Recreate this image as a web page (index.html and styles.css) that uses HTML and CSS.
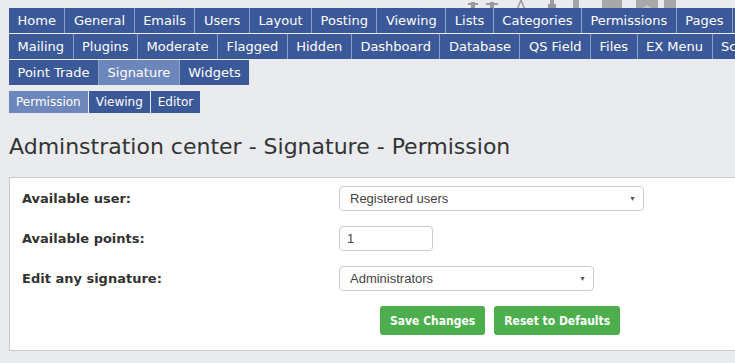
FILE: index.html
```html
<!DOCTYPE html>
<html lang="en">
  <head>
    <meta charset="UTF-8" />
    <title>Admin - Signature</title>
    <link rel="stylesheet" href="styles.css">
  </head>
  <body>
    <div class="page">
      <svg class="skyline" width="735" height="10" viewBox="0 0 735 10">
        <rect x="471" y="2" width="4" height="8" fill="#9a9a9a" />
        <rect x="468" y="3" width="10" height="2" fill="#9a9a9a" />
        <rect x="490" y="2" width="4" height="8" fill="#9a9a9a" />
        <rect x="486" y="3" width="12" height="2" fill="#9a9a9a" />
        <path d="M517 10 L521 0 L525 10 Z" fill="none" stroke="#9a9a9a" stroke-width="1.5" />
        <rect x="548" y="4" width="8" height="6" fill="#9a9a9a" />
        <rect x="550" y="0" width="4" height="4" fill="#9a9a9a" />
        <rect x="573" y="0" width="6" height="10" fill="#a3a3a3" />
        <rect x="602" y="0" width="20" height="10" fill="#a8a8a8" />
        <rect x="636" y="0" width="22" height="10" fill="#a8a8a8" />
        <path d="M640 10 L647 5 L654 10 Z" fill="#c8c8c8" />
        <rect x="664" y="0" width="12" height="10" fill="#a8a8a8" />
      </svg>

      <div class="menu">
        <div class="menu-row">
          <a class="tab">Home</a>
          <a class="tab">General</a>
          <a class="tab">Emails</a>
          <a class="tab">Users</a>
          <a class="tab">Layout</a>
          <a class="tab">Posting</a>
          <a class="tab">Viewing</a>
          <a class="tab">Lists</a>
          <a class="tab">Categories</a>
          <a class="tab">Permissions</a>
          <a class="tab">Pages</a>
          <a class="tab"></a>
        </div>
        <div class="menu-row">
          <a class="tab">Mailing</a>
          <a class="tab">Plugins</a>
          <a class="tab">Moderate</a>
          <a class="tab">Flagged</a>
          <a class="tab">Hidden</a>
          <a class="tab">Dashboard</a>
          <a class="tab">Database</a>
          <a class="tab">QS Field</a>
          <a class="tab">Files</a>
          <a class="tab">EX Menu</a>
          <a class="tab">Scripts</a>
        </div>
        <div class="menu-row">
          <a class="tab">Point Trade</a>
          <a class="tab active">Signature</a>
          <a class="tab">Widgets</a>
        </div>
      </div>

      <div class="submenu">
        <a class="subtab active">Permission</a>
        <a class="subtab">Viewing</a>
        <a class="subtab">Editor</a>
      </div>

      <h1 class="title">Adminstration center - Signature - Permission</h1>

      <form class="panel" action="">
        <div class="field">
          <label class="label">Available user:</label>
          <div class="select wide">Registered users<span class="caret">&#9660;</span></div>
        </div>
        <div class="field">
          <label class="label">Available points:</label>
          <input class="input" type="text" value="1" />
        </div>
        <div class="field">
          <label class="label">Edit any signature:</label>
          <div class="select mid">Administrators<span class="caret">&#9660;</span></div>
        </div>
        <div class="btns">
          <button class="btn" type="submit">Save Changes</button>
          <button class="btn" type="reset">Reset to Defaults</button>
        </div>
      </form>
    </div>
  </body>
</html>
```
FILE: styles.css
```css
html,
body {
  margin: 0;
  background-color: #e9ebee;
  overflow: hidden;
}
.page {
  position: relative;
  padding: 8px 0 0 9px;
  width: 760px;
}
.skyline {
  position: absolute;
  top: 0;
  left: 0;
}
.menu {
  position: relative;
  display: flex;
  flex-direction: column;
  gap: 1px;
}
.menu-row {
  display: flex;
  gap: 1px;
}
.tab {
  background-color: #3b5998;
  color: #fff;
  font-family: "DejaVu Sans", Verdana, sans-serif;
  font-size: 13px;
  height: 25px;
  line-height: 25px;
  padding: 0 8.5px;
  white-space: nowrap;
  box-shadow: 1px 0 0 #8fa0c6;
}
.menu-row .tab:last-child {
  box-shadow: none;
}
.tab.active {
  background-color: #6d87bd;
}
.submenu {
  display: flex;
  gap: 1px;
  margin-top: 6px;
}
.subtab {
  background-color: #3b5998;
  color: #fff;
  font-family: "DejaVu Sans", Verdana, sans-serif;
  font-size: 12px;
  height: 22px;
  line-height: 22px;
  padding: 0 7px;
}
.subtab.active {
  background-color: #6d87bd;
}
.title {
  font-family: "DejaVu Sans", Verdana, sans-serif;
  font-weight: normal;
  font-size: 22px;
  color: #333;
  margin: 19px 0 0 0;
  line-height: 30px;
}
.panel {
  margin-top: 15px;
  background-color: #fff;
  border: 1px solid #c8c8c8;
  padding: 8px 12px 12px 12px;
  height: 152px;
}
.field {
  display: flex;
  align-items: center;
  height: 25px;
  margin-bottom: 15px;
}
.label {
  width: 317px;
  font-family: "DejaVu Sans", Verdana, sans-serif;
  font-weight: bold;
  font-size: 13px;
  color: #333;
}
.select,
.input {
  box-sizing: border-box;
  height: 25px;
  border: 1px solid #ccc;
  border-radius: 4px;
  font-family: "Liberation Sans", Arial, sans-serif;
  font-size: 13px;
  color: #444;
  padding: 0 10px;
  background-color: #fff;
}
.select {
  display: flex;
  align-items: center;
  justify-content: space-between;
}
.select.wide {
  width: 305px;
}
.select.mid {
  width: 255px;
}
.caret {
  font-size: 7px;
  color: #555;
  margin-right: -3px;
}
.input {
  width: 94px;
  padding: 0 7px;
}
.btns {
  display: flex;
  gap: 9px;
  margin-left: 358px;
  margin-top: 5px;
}
.btn {
  background-color: #4cae4c;
  border: none;
  border-radius: 3px;
  color: #fff;
  font-family: "DejaVu Sans Condensed", "DejaVu Sans", sans-serif;
  font-weight: bold;
  font-size: 12px;
  height: 29px;
  padding: 0 10px;
}
```
